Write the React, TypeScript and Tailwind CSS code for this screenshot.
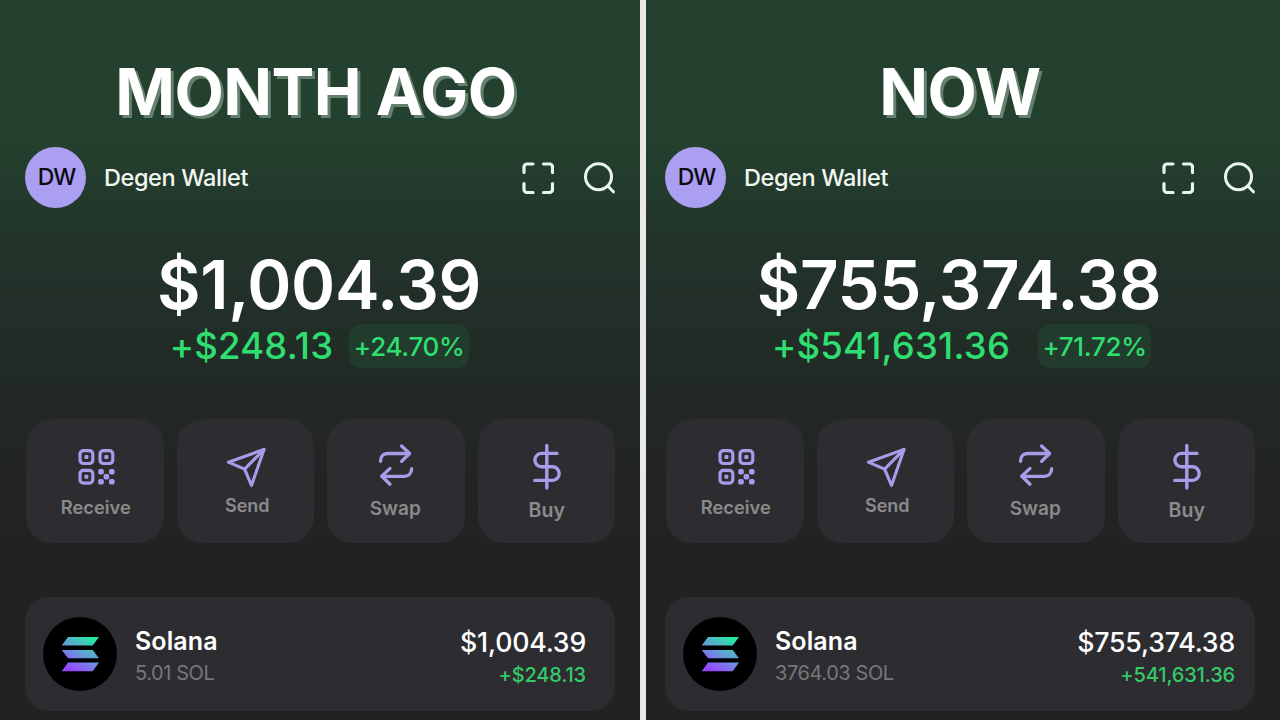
import React from 'react';

const ReceiveIcon = () => (
  <svg className="h-12 w-12" viewBox="0 0 48 48" fill="none" stroke="#aa9bea" strokeWidth="3.2">
    <rect x="9" y="7.7" width="12.8" height="12.8" rx="3.4" />
    <rect x="29" y="7.7" width="12.8" height="12.8" rx="3.4" />
    <rect x="9" y="27.3" width="12.8" height="12.8" rx="3.4" />
    <g fill="#aa9bea" stroke="none">
      <rect x="13.4" y="12.1" width="4" height="4" rx="1" />
      <rect x="33.4" y="12.1" width="4" height="4" rx="1" />
      <rect x="13.4" y="31.7" width="4" height="4" rx="1" />
      <rect x="27.2" y="26" width="5.6" height="5.6" rx="1.8" />
      <rect x="38" y="26" width="5.6" height="5.6" rx="1.8" />
      <rect x="32.6" y="31" width="5.6" height="5.6" rx="1.8" />
      <rect x="27.2" y="36" width="5.6" height="5.6" rx="1.8" />
      <rect x="38" y="36" width="5.6" height="5.6" rx="1.8" />
    </g>
  </svg>
);

const SendIcon = () => (
  <svg className="h-12 w-12" viewBox="0 0 48 48" fill="none" stroke="#aa9bea" strokeWidth="3.1" strokeLinecap="round" strokeLinejoin="round">
    <path d="M7.4 19.2 43 6.4 30.5 42.4 23.6 26.2Z" />
    <path d="M23.6 26.2 43 6.4" />
  </svg>
);

const SwapIcon = () => (
  <svg className="-ml-[2px] h-12 w-12" viewBox="0 0 48 48" fill="none" stroke="#aa9bea" strokeWidth="3.3" strokeLinecap="round" strokeLinejoin="round">
    <path d="M9.5 18.3C9.5 13.5 12 10.5 16.5 10.5H38" />
    <path d="M30.6 3 38.6 10.5 30.6 18.4" />
    <path d="M40.6 25.7C40.6 30.3 37.8 33.3 33.2 33.3H11" />
    <path d="M19 25.4 10.8 33.3 19 41.2" />
  </svg>
);

const BuyIcon = () => (
  <svg className="h-12 w-12" viewBox="0 0 48 48" fill="none" stroke="#aa9bea" strokeWidth="3.4" strokeLinecap="round">
    <path d="M24.8 2.4V45" />
    <path d="M35 10.4H19.6a6.7 6.7 0 0 0 0 13.4H30.4a6.8 6.8 0 0 1 0 13.6H12.8" />
  </svg>
);

const SolanaLogo = () => (
  <svg className="h-[74px] w-[74px]" viewBox="0 0 74 74">
    <defs>
      <linearGradient id="sol" gradientUnits="userSpaceOnUse" x1="26" y1="58" x2="49" y2="16">
        <stop offset="0.1" stopColor="#9945ff" />
        <stop offset="0.5" stopColor="#6a96dc" />
        <stop offset="0.9" stopColor="#25e8a2" />
      </linearGradient>
    </defs>
    <circle cx="37" cy="37" r="37" fill="#000" />
    <g fill="url(#sol)">
      <path d="M25 20H56L49.7 28.6H18.7Z" />
      <path d="M18.7 33H49.7L56 41.2H25Z" />
      <path d="M25 45.6H56L49.7 54.2H18.7Z" />
    </g>
  </svg>
);

const actions = [
  { label: 'Receive', icon: <ReceiveIcon />, labelClass: 'mt-[5px] ml-[2px] text-[18.3px]' },
  { label: 'Send', icon: <SendIcon />, labelClass: 'mt-[2px] ml-[4px] text-[18px]' },
  { label: 'Swap', icon: <SwapIcon />, labelClass: 'mt-[6px] -ml-[1px] text-[19px]' },
  { label: 'Buy', icon: <BuyIcon />, labelClass: 'mt-[8px] ml-[1px] text-[19.5px]' }
];

const wallets = [
  {
    title: 'MONTH AGO',
    titleClass: 'mr-[8px]',
    balance: '$1,004.39',
    change: '+$248.13',
    percent: '+24.70%',
    changeClass: 'gap-[16px] pr-[1px]',
    badgeClass: 'w-[120px]',
    amount: '5.01 SOL',
    value: '$1,004.39',
    gain: '+$248.13',
    panelClass: 'w-[640px] pl-[25px] pr-[25px]',
    assetClass: 'pr-[29px]'
  },
  {
    title: 'NOW',
    titleClass: '',
    balance: '$755,374.38',
    change: '+$541,631.36',
    percent: '+71.72%',
    changeClass: 'gap-[28px] pl-[3px]',
    badgeClass: 'w-[113px]',
    amount: '3764.03 SOL',
    value: '$755,374.38',
    gain: '+541,631.36',
    panelClass: 'w-[634px] pl-[19px] pr-[25px]',
    assetClass: 'pr-[20px]'
  }
];

const App = () => {
  return (
    <div className="flex h-[720px] w-[1280px] gap-[6px] overflow-hidden bg-[#e9e9e7] font-['Inter',sans-serif] text-white">
      {wallets.map((wallet) => (
        <section
          key={wallet.title}
          className={`flex h-full shrink-0 flex-col bg-[linear-gradient(180deg,#24402e_0px,#24402e_140px,#22332a_250px,#222a26_380px,#222322_500px,#222222_560px)] ${wallet.panelClass}`}
        >
          <h1 className={`mt-[60px] flex h-[63px] items-center justify-center text-[64px] font-bold tracking-[-0.5px] whitespace-nowrap [text-shadow:3px_3px_0_#64806e] ${wallet.titleClass}`}>
            {wallet.title}
          </h1>

          <header className="mt-[24px] flex h-[61px] items-center">
            <div className="flex h-[61px] w-[61px] items-center justify-center rounded-full bg-[#ab9ff2] pl-[2px] text-[23px] font-medium tracking-[-1px] text-[#0c0b14]">
              DW
            </div>
            <span className="ml-[18px] text-[23.5px] font-medium tracking-[-0.4px] text-[#f2f7f3]">Degen Wallet</span>
            <div className="ml-auto flex items-center gap-[29px]">
              <svg className="h-8 w-8" viewBox="0 0 32 32" fill="none" stroke="#eaf5ee" strokeWidth="3.2" strokeLinecap="round">
                <path d="M2 10.5V5a3 3 0 0 1 3-3H11M21.5 2H27.5a3 3 0 0 1 3 3V10.5M30.5 21.5V27.5a3 3 0 0 1-3 3H21.5M11 30.5H5A3 3 0 0 1 2 27.5V21.5" />
              </svg>
              <svg className="h-8 w-8" viewBox="0 0 32 32" fill="none" stroke="#eaf5ee" strokeWidth="3" strokeLinecap="round">
                <circle cx="15.5" cy="14.7" r="13" />
                <path d="M24.8 24 30.4 29.8" />
              </svg>
            </div>
          </header>

          <div className="mt-[37px] mr-[2px] flex h-[80px] items-center justify-center text-[67px] font-semibold tracking-[-0.4px] whitespace-nowrap">
            {wallet.balance}
          </div>
          <div className={`-mt-px flex h-[44px] items-center justify-center whitespace-nowrap text-[#2fde70] ${wallet.changeClass}`}>
            <span className="text-[36.5px] font-medium tracking-[0.2px]">{wallet.change}</span>
            <span className={`flex h-[44px] items-center justify-center rounded-[12px] bg-[#213c2c] text-[26px] font-medium tracking-[-0.3px] ${wallet.badgeClass}`}>
              {wallet.percent}
            </span>
          </div>

          <div className="mt-[51px] ml-[1px] grid h-[124px] grid-cols-4 gap-[13px]">
            {actions.map((action) => (
              <button key={action.label} className="flex flex-col items-center rounded-[26px] bg-[#2c2c31] pt-[24px]">
                {action.icon}
                <span className={`flex h-6 items-center font-semibold text-[#8b8b8c] ${action.labelClass}`}>{action.label}</span>
              </button>
            ))}
          </div>

          <div className={`mt-[54px] flex h-[114px] items-center rounded-[24px] bg-[#2c2c31] pl-[18px] ${wallet.assetClass}`}>
            <SolanaLogo />
            <div className="ml-[18px] flex flex-col pt-[6px]">
              <span className="flex h-[31px] items-center text-[25px] font-semibold tracking-[0.1px]">Solana</span>
              <span className="flex h-[31px] items-center text-[20px] tracking-[-0.42px] text-[#77777a]">{wallet.amount}</span>
            </div>
            <div className="ml-auto flex flex-col items-end pt-[9px]">
              <span className="flex h-[33px] items-center text-[26.7px] font-medium tracking-[-0.2px]">{wallet.value}</span>
              <span className="flex h-[33px] items-center text-[20px] font-medium tracking-[-0.15px] text-[#35c968]">{wallet.gain}</span>
            </div>
          </div>
        </section>
      ))}
    </div>
  );
};

export default App;
